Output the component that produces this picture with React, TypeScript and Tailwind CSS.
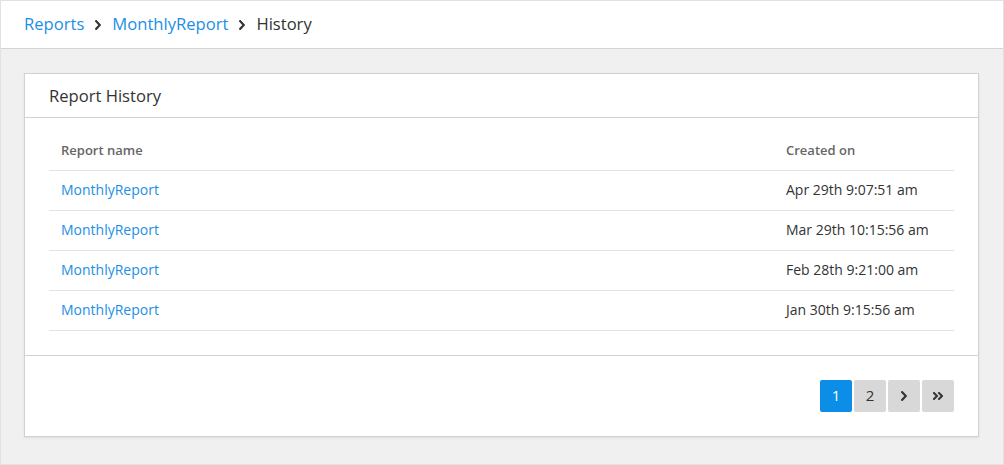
const rows = [
  { name: 'MonthlyReport', created: 'Apr 29th 9:07:51 am' },
  { name: 'MonthlyReport', created: 'Mar 29th 10:15:56 am' },
  { name: 'MonthlyReport', created: 'Feb 28th 9:21:00 am' },
  { name: 'MonthlyReport', created: 'Jan 30th 9:15:56 am' },
];

const Angle = ({ className }: { className?: string }) => (
  <svg viewBox="0 0 6 10" className={className} fill="none" stroke="currentColor" strokeWidth={2.2} strokeLinecap="square">
    <polyline points="1.2,1.2 4.8,5 1.2,8.8" />
  </svg>
);

const AngleDouble = ({ className }: { className?: string }) => (
  <svg viewBox="0 0 10 8" className={className} fill="none" stroke="currentColor" strokeWidth={2} strokeLinecap="square">
    <polyline points="1,1 4,4 1,7" />
    <polyline points="6,1 9,4 6,7" />
  </svg>
);

const App = () => {
  return (
    <div
      className="w-[1004px] h-[465px] flex flex-col bg-[#f0f0f0] border border-[#e2e2e2] text-[#333]"
      style={{ fontFamily: '"Open Sans", "Noto Sans", sans-serif' }}
    >
      <header className="h-[48px] shrink-0 bg-white border-b border-[#d4d4d4] flex items-center px-[23px] text-[16.6px]">
        <a href="#" className="text-[#1b8fe6]">Reports</a>
        <Angle className="w-[6px] h-[10px] mx-[11px] text-[#333]" />
        <a href="#" className="text-[#1b8fe6]">MonthlyReport</a>
        <Angle className="w-[6px] h-[10px] mx-[11px] text-[#333]" />
        <span className="text-[#333]">History</span>
      </header>

      <main className="flex-1 pt-[24px] pl-[23px] pr-[24px]">
        <div className="bg-white border border-[#d2d2d2] shadow-[0_1px_2px_rgba(0,0,0,0.08)]">
          <div className="h-[44px] flex items-center px-[24px] pt-[2px] border-b border-[#d2d2d2] text-[16.6px] text-[#333]">
            Report History
          </div>

          <div className="px-[24px] pt-[12px] pb-[24px] border-b border-[#d2d2d2]">
            <table className="w-full text-[14px] border-collapse">
              <thead>
                <tr className="h-[40px] border-b border-[#e3e3e3]">
                  <th className="text-left text-[13px] font-semibold text-[#666] px-[12px] pt-[2px]">Report name</th>
                  <th className="text-left text-[13px] font-semibold text-[#666] px-[12px] pt-[2px] w-[180px]">Created on</th>
                </tr>
              </thead>
              <tbody>
                {rows.map((r, i) => (
                  <tr key={i} className="h-[40px] border-b border-[#e3e3e3]">
                    <td className="px-[12px] pb-[2px]">
                      <a href="#" className="text-[#1b8fe6]">{r.name}</a>
                    </td>
                    <td className="px-[12px] pb-[2px] text-[#333]">{r.created}</td>
                  </tr>
                ))}
              </tbody>
            </table>
          </div>

          <div className="flex justify-end px-[24px] py-[24px]">
            <div className="flex gap-[2px] text-[15px]">
              <button className="w-[32px] h-[32px] rounded-[2px] bg-[#0b8de8] text-white flex items-center justify-center">1</button>
              <button className="w-[32px] h-[32px] rounded-[2px] bg-[#d8d8d8] text-[#333] flex items-center justify-center">2</button>
              <button className="w-[32px] h-[32px] rounded-[2px] bg-[#d8d8d8] text-[#333] flex items-center justify-center">
                <Angle className="w-[6px] h-[10px]" />
              </button>
              <button className="w-[32px] h-[32px] rounded-[2px] bg-[#d8d8d8] text-[#333] flex items-center justify-center">
                <AngleDouble className="w-[10px] h-[8px]" />
              </button>
            </div>
          </div>
        </div>
      </main>
    </div>
  );
};

export default App;
